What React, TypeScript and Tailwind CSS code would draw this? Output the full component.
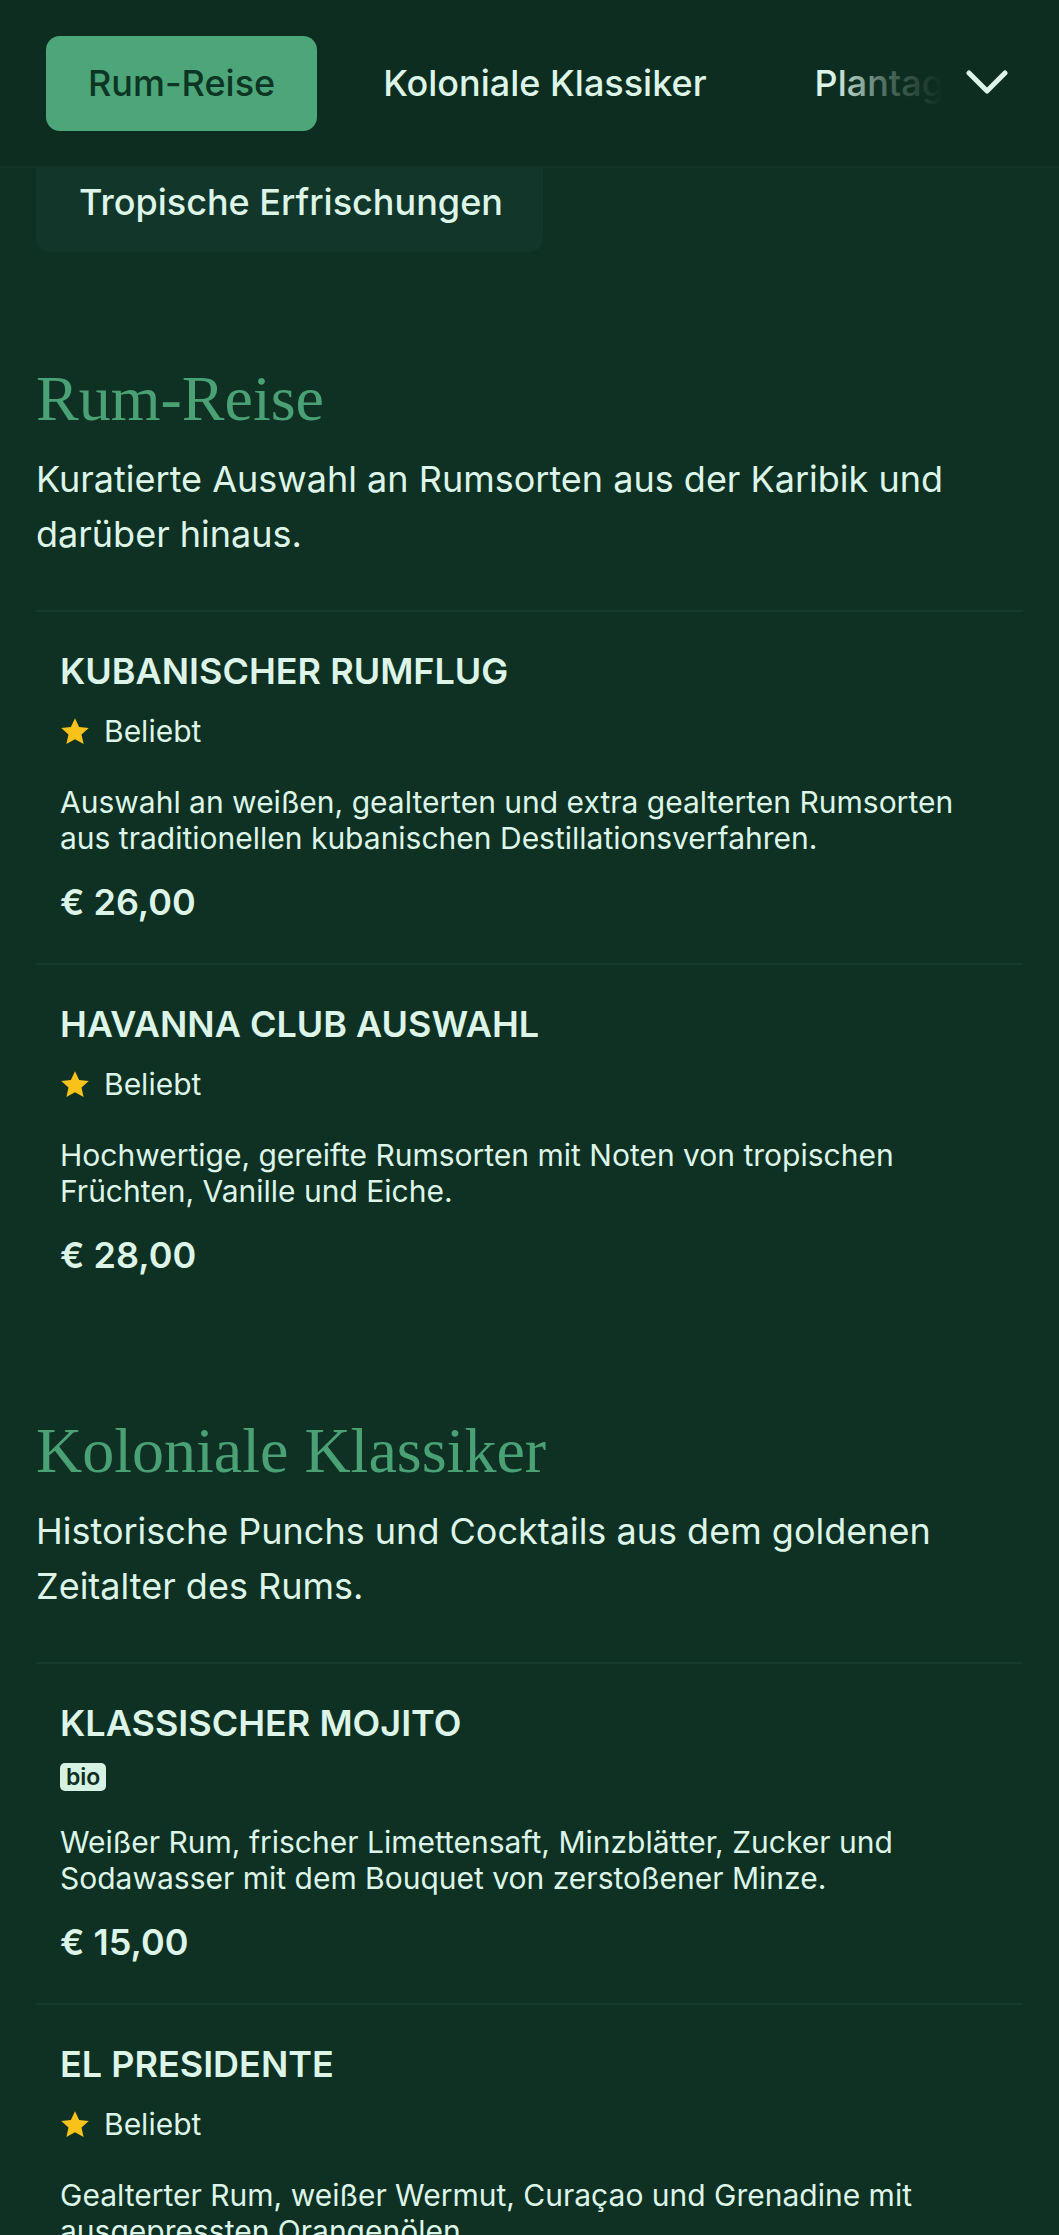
import { ReactNode } from 'react';

type Item = {
  name: string;
  tag: 'popular' | 'bio';
  text: string;
  price: string;
};

type Section = {
  title: string;
  intro: string;
  items: Item[];
};

const sections: Section[] = [
  {
    title: 'Rum-Reise',
    intro: 'Kuratierte Auswahl an Rumsorten aus der Karibik und darüber hinaus.',
    items: [
      {
        name: 'Kubanischer Rumflug',
        tag: 'popular',
        text: 'Auswahl an weißen, gealterten und extra gealterten Rumsorten aus traditionellen kubanischen Destillationsverfahren.',
        price: '€ 26,00',
      },
      {
        name: 'Havanna Club Auswahl',
        tag: 'popular',
        text: 'Hochwertige, gereifte Rumsorten mit Noten von tropischen Früchten, Vanille und Eiche.',
        price: '€ 28,00',
      },
    ],
  },
  {
    title: 'Koloniale Klassiker',
    intro: 'Historische Punchs und Cocktails aus dem goldenen Zeitalter des Rums.',
    items: [
      {
        name: 'Klassischer Mojito',
        tag: 'bio',
        text: 'Weißer Rum, frischer Limettensaft, Minzblätter, Zucker und Sodawasser mit dem Bouquet von zerstoßener Minze.',
        price: '€ 15,00',
      },
      {
        name: 'El Presidente',
        tag: 'popular',
        text: 'Gealterter Rum, weißer Wermut, Curaçao und Grenadine mit ausgepressten Orangenölen.',
        price: '€ 16,00',
      },
    ],
  },
];

function Star() {
  return (
    <svg width="30" height="29" viewBox="0 0 24 23" className="shrink-0">
      <path
        d="M12 0.8l3.3 7.1 7.7.8-5.8 5.2 1.7 7.6L12 17.6l-6.9 3.9 1.7-7.6L1 8.7l7.7-.8z"
        fill="#f7c31a"
      />
    </svg>
  );
}

function Tab({ children, active }: { children: ReactNode; active?: boolean }) {
  return (
    <button
      className={
        active
          ? 'h-[95px] px-[42px] rounded-[14px] bg-[#4ca679] text-[#0d3523] text-[36px] font-medium'
          : 'h-[95px] px-[42px] rounded-[14px] text-[#dcf5e8] text-[36px] font-medium'
      }
    >
      {children}
    </button>
  );
}

function MenuItem({ item }: { item: Item }) {
  return (
    <div className="border-t-2 border-[#163b2c] px-[24px] pt-[37px] pb-[39px]">
      <h3 className="text-[36px] leading-[44px] font-semibold uppercase text-[#dcf5e8]">
        {item.name}
      </h3>
      {item.tag === 'popular' ? (
        <div className="mt-[18px] h-[40px] flex items-center gap-[14px]">
          <Star />
          <span className="text-[30px] text-[#dcf5e8]">Beliebt</span>
        </div>
      ) : (
        <div className="mt-[18px] flex">
          <span className="h-[28px] px-[6px] rounded-[5px] bg-[#d5f2e2] text-[#0d2e21] text-[23px] leading-[28px] font-semibold">
            bio
          </span>
        </div>
      )}
      <p className="mt-[33px] text-[30px] leading-[36px] text-[#dcf5e8] pr-[20px]">
        {item.text}
      </p>
      <p className="mt-[24px] text-[36px] leading-[44px] font-semibold text-[#dcf5e8]">
        {item.price}
      </p>
    </div>
  );
}

export default function App() {
  return (
    <div
      className="min-h-screen bg-[#0f3124] text-[#dcf5e8]"
      style={{ fontFamily: 'Inter, "Noto Sans", sans-serif' }}
    >
      <header className="h-[168px] flex items-center bg-[#0e2d21] border-b-2 border-[#133628]">
        <div className="relative flex-1 overflow-hidden">
          <div className="flex items-center gap-[24px] pl-[46px] whitespace-nowrap">
            <Tab active>Rum-Reise</Tab>
            <Tab>Koloniale Klassiker</Tab>
            <Tab>Plantagen-Punsch</Tab>
          </div>
          <div className="absolute right-0 top-0 bottom-0 w-[110px] bg-gradient-to-r from-transparent via-[#0e2d21]/70 to-[#0e2d21]" />
        </div>
        <button className="ml-[24px] mr-[51px] w-[42px] flex justify-center">
          <svg width="42" height="26" viewBox="0 0 42 26" fill="none">
            <path
              d="M3 3l18 18 18-18"
              stroke="#dcf5e8"
              strokeWidth="5"
              strokeLinecap="round"
              strokeLinejoin="round"
            />
          </svg>
        </button>
      </header>

      <div className="px-[36px]">
        <div className="w-[507px] h-[84px] pt-[12px] pl-[43px] rounded-b-[14px] bg-[#12372a] text-[36px] leading-[44px] font-medium text-[#dcf5e8]">
          Tropische Erfrischungen
        </div>
      </div>

      <main className="px-[36px] pt-[12px] pb-[200px]">
        {sections.map((section) => (
          <section key={section.title} className="pt-[100px]">
            <h2
              className="text-[64px] leading-[70px] text-[#4aa175]"
              style={{ fontFamily: '"Liberation Serif", "DejaVu Serif", serif' }}
            >
              {section.title}
            </h2>
            <p className="mt-[18px] mb-[48px] text-[36px] leading-[55px] text-[#dcf5e8]">
              {section.intro}
            </p>
            {section.items.map((item) => (
              <MenuItem key={item.name} item={item} />
            ))}
          </section>
        ))}
      </main>
    </div>
  );
}
